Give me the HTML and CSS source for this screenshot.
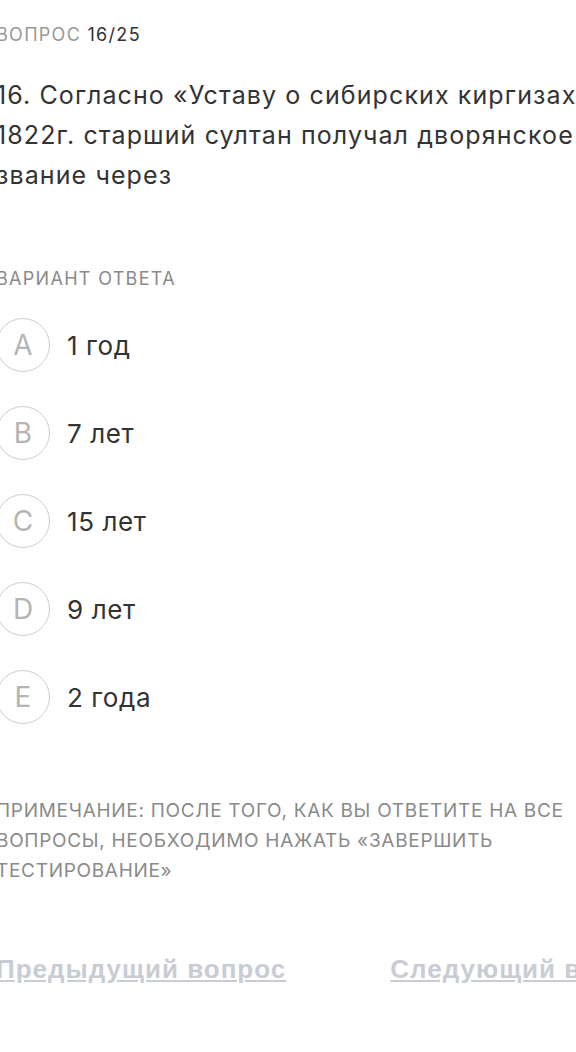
FILE: index.html
```html
<!DOCTYPE html>
<html lang="ru">
<head>
<meta charset="utf-8">
<link rel="stylesheet" href="styles.css">
</head>
<body>
<div class="page">
  <div class="counter"><span class="counter-label">ВОПРОС</span> 16/25</div>
  <h1 class="question">16. Согласно «Уставу о сибирских киргизах» 1822г. старший султан получал дворянское звание через</h1>
  <div class="section-label">ВАРИАНТ ОТВЕТА</div>
  <ul class="options">
    <li class="option"><span class="letter">A</span><span class="answer">1 год</span></li>
    <li class="option"><span class="letter">B</span><span class="answer">7 лет</span></li>
    <li class="option"><span class="letter">C</span><span class="answer">15 лет</span></li>
    <li class="option"><span class="letter">D</span><span class="answer">9 лет</span></li>
    <li class="option"><span class="letter">E</span><span class="answer">2 года</span></li>
  </ul>
  <p class="note">ПРИМЕЧАНИЕ: ПОСЛЕ ТОГО, КАК ВЫ ОТВЕТИТЕ НА ВСЕ ВОПРОСЫ, НЕОБХОДИМО НАЖАТЬ «ЗАВЕРШИТЬ ТЕСТИРОВАНИЕ»</p>
  <div class="nav">
    <a class="nav-link" href="#">Предыдущий вопрос</a>
    <a class="nav-link" href="#">Следующий вопрос</a>
  </div>
</div>
</body>
</html>
```
FILE: styles.css
```css
html, body {
  margin: 0;
  padding: 0;
  background: #ffffff;
  overflow: hidden;
}
body {
  font-family: Inter, "Noto Sans", sans-serif;
  color: #333333;
}
.page {
  width: 640px;
  margin-left: -4px;
  padding-top: 24px;
}
.counter {
  font-size: 18px;
  line-height: 22px;
  letter-spacing: 1.3px;
  color: #333333;
}
.counter-label {
  color: #999999;
}
.question {
  margin: 29px 0 0 0;
  font-size: 25px;
  font-weight: 400;
  line-height: 40px;
  letter-spacing: 1.1px;
  width: 640px;
  color: #333333;
}
.section-label {
  margin-top: 73px;
  font-size: 18px;
  line-height: 22px;
  letter-spacing: 1.3px;
  color: #8a8a8a;
}
.options {
  list-style: none;
  margin: 28px 0 0 0;
  padding: 0;
  display: flex;
  flex-direction: column;
  gap: 34px;
}
.option {
  display: flex;
  align-items: center;
  gap: 17px;
}
.letter {
  width: 52px;
  height: 52px;
  border: 1px solid #cccccc;
  border-radius: 50%;
  display: flex;
  align-items: center;
  justify-content: center;
  font-size: 28px;
  color: #b5b5b5;
  flex: none;
}
.answer {
  font-size: 26px;
  letter-spacing: 0.6px;
  color: #333333;
}
.note {
  margin: 72px 0 0 0;
  width: 590px;
  font-size: 19px;
  line-height: 30px;
  letter-spacing: 0.7px;
  color: #8a8a8a;
}
.nav {
  margin-top: 68px;
  display: flex;
  gap: 104px;
  white-space: nowrap;
}
.nav-link {
  font-family: "Liberation Sans", Arial, sans-serif;
  font-size: 26px;
  font-weight: 700;
  letter-spacing: 1px;
  color: #c9ccd4;
  text-decoration: underline;
}
```
